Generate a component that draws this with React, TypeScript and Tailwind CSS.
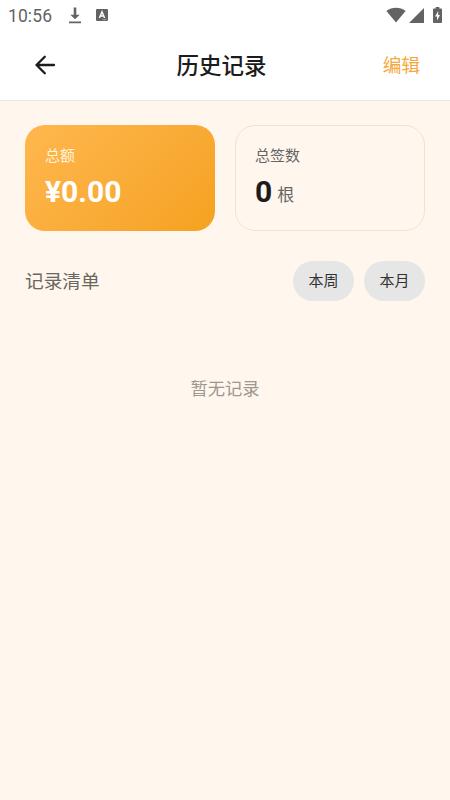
import type { ReactNode } from "react";

function StatusBar() {
  return (
    <div className="flex h-[30px] items-center justify-between pl-2 pr-[8px] text-[#636363]">
      <div className="flex items-center">
        <span className="w-[60px] pt-px text-[17.5px] leading-[30px] tracking-[0.1px]">10:56</span>
        <svg className="h-[18px] w-[14px]" viewBox="0 0 14 18" fill="currentColor">
          <path d="M5.7 1.500h2.600v7.200h3.400L7 13.300 2.300 8.700h3.400zM1 15.500h12v1.800H1z" />
        </svg>
        <svg className="ml-[14px] h-[12px] w-[12px]" viewBox="0 0 12 12">
          <rect width="12" height="12" rx="1" fill="currentColor" />
          <path d="M3.4 9 6 2.8 8.6 9M4.3 7h3.4" fill="none" stroke="#fff" strokeWidth="1.4" />
          <path d="M6.5 10.7h4" stroke="#fff" strokeWidth=".4" />
        </svg>
      </div>
      <div className="flex items-center">
        <svg className="h-[16px] w-[20px]" viewBox="0 0 20 16" fill="currentColor">
          <path d="M.4 4C6 -.2 14 -.2 19.6 4L10 15.5z" />
        </svg>
        <svg className="ml-[3px] h-[15px] w-[15px]" viewBox="0 0 15 15" fill="currentColor">
          <path d="M15 0v15H0z" />
        </svg>
        <svg className="ml-[9px] h-[16px] w-[9px]" viewBox="0 0 10 16" preserveAspectRatio="none">
          <path d="M3 0h4v1.6h2a1 1 0 0 1 1 1V15a1 1 0 0 1-1 1H1a1 1 0 0 1-1-1V2.6a1 1 0 0 1 1-1h2z" fill="currentColor" />
          <path d="M5.8 4 2.3 9.4h2.2v4l3.3-5.5H5.8z" fill="#fff" />
        </svg>
      </div>
    </div>
  );
}

function Header() {
  return (
    <header className="grid h-[71px] grid-cols-[1fr_auto_1fr] items-center border-b border-[#eae6e2] pl-[34px] pr-[30px]">
      <button aria-label="返回" className="w-fit">
        <svg
          className="h-[22px] w-[22px]"
          viewBox="0 0 22 22"
          fill="none"
          stroke="#1c1c1c"
          strokeWidth="2.3"
          strokeLinecap="round"
          strokeLinejoin="round"
        >
          <path d="M20 11H2.5M10.8 2.7 2.5 11l8.3 8.3" />
        </svg>
      </button>
      <h1 className="-ml-[11px] pt-0.5 text-[22.5px] font-medium leading-8 text-[#1c1c1c]">历史记录</h1>
      <button className="justify-self-end pt-0.5 text-[18.7px] leading-7 text-[#f5a93b]">编辑</button>
    </header>
  );
}

function Chip({ children }: { children: ReactNode }) {
  return (
    <button className="h-10 w-[61px] rounded-[20px] bg-[#e6e6e6] text-[15px] leading-10 text-[#333]">
      {children}
    </button>
  );
}

export default function App() {
  return (
    <div className="flex h-[800px] w-[450px] flex-col overflow-hidden bg-[#fff7ed] font-[Roboto,'Noto_Sans_CJK_SC',sans-serif]">
      <div className="bg-white">
        <StatusBar />
        <Header />
      </div>

      <main className="flex flex-col px-[25px] pt-6">
        <div className="grid grid-cols-2 gap-5">
          <section className="h-[106px] rounded-[20px] bg-linear-135 from-[#ffb74d] to-[#f5a21e] px-5 pt-5 text-white">
            <p className="text-[15px] leading-[22px] text-[#fff3dc]">总额</p>
            <p className="mt-[7px] text-[30px] font-bold leading-9">¥0.00</p>
          </section>
          <section className="h-[106px] rounded-[20px] border border-[#f1e1d3] px-[19px] pt-[19px]">
            <p className="text-[15px] leading-[22px] text-[#666]">总签数</p>
            <p className="mt-[7px] flex items-start gap-[5px] leading-9">
              <span className="text-[30px] font-bold text-[#1c1c1c]">0</span>
              <span className="pt-[3px] text-[17px] text-[#666]">根</span>
            </p>
          </section>
        </div>

        <div className="mt-[30px] flex items-center justify-between">
          <h2 className="pt-0.5 text-[18.7px] leading-7 text-[#6b6661]">记录清单</h2>
          <div className="flex gap-[10px]">
            <Chip>本周</Chip>
            <Chip>本月</Chip>
          </div>
        </div>

        <p className="mt-[75px] text-center text-[17.3px] leading-[26px] text-[#9c9792]">暂无记录</p>
      </main>
    </div>
  );
}
